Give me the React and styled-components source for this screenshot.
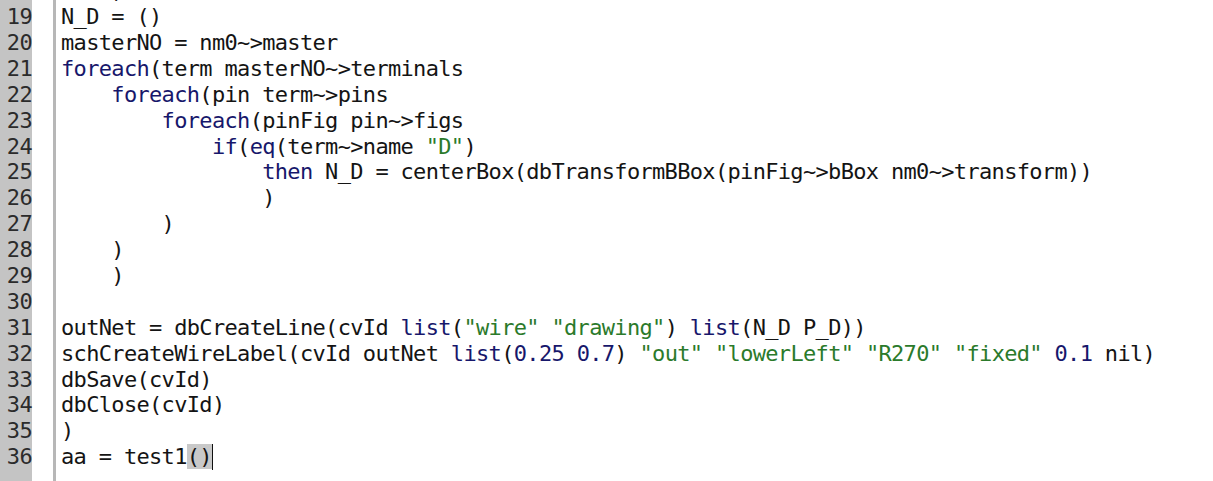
import React from 'react'
import styled, { createGlobalStyle } from 'styled-components'

const Global = createGlobalStyle`
    html, body {
        margin: 0;
        padding: 0;
        background: #fff;
    }
`

const LINE = 25.9

const Editor = styled.div`
    width: 1213px;
    height: 481px;
    overflow: hidden;
    display: flex;
    background: #fff;
    font-family: 'DejaVu Sans Mono', 'Liberation Mono', monospace;
    font-size: 22px;
    letter-spacing: -0.67px;
`
const Gutter = styled.div`
    width: 32px;
    flex: none;
    background: #c4c4c4;
    color: #2b2b2b;
    text-align: right;
    margin-top: -${LINE - 4.05}px;
    padding-bottom: 40px;
`
const Num = styled.div`
    height: ${LINE}px;
    line-height: ${LINE}px;
    white-space: pre;
`
const Margin = styled.div`
    width: 21px;
    flex: none;
    border-right: 3px solid #b7b7b7;
`
const Code = styled.div`
    flex: 1;
    padding-left: 5px;
    margin-top: -${LINE - 4.05}px;
    color: #141414;
`
const Line = styled.div`
    height: ${LINE}px;
    line-height: ${LINE}px;
    white-space: pre;
`
const Tok = styled.span`
    color: ${p => p.$kind === 'kw' || p.$kind === 'num' ? '#17176b' : p.$kind === 'str' ? '#2b7a2b' : 'inherit'};
`
const Match = styled.span`
    background: #c9c9c9;
`
const Caret = styled.span`
    display: inline-block;
    width: 1px;
    height: 26px;
    background: #111;
    vertical-align: middle;
    margin-top: -3px;
`

const lines = [
    '    )',
    'N_D = ()',
    'masterNO = nm0~>master',
    'foreach(term masterNO~>terminals',
    '    foreach(pin term~>pins',
    '        foreach(pinFig pin~>figs',
    '            if(eq(term~>name "D")',
    '                then N_D = centerBox(dbTransformBBox(pinFig~>bBox nm0~>transform))',
    '                )',
    '        )',
    '    )',
    '    )',
    '',
    'outNet = dbCreateLine(cvId list("wire" "drawing") list(N_D P_D))',
    'schCreateWireLabel(cvId outNet list(0.25 0.7) "out" "lowerLeft" "R270" "fixed" 0.1 nil)',
    'dbSave(cvId)',
    'dbClose(cvId)',
    ')',
]

const tokenRe = /("[^"]*")|(\b\d+\.\d+\b)|\b(foreach|if|then|list|eq)\b/g

function highlight(text) {
    const out = []
    let last = 0
    let m
    tokenRe.lastIndex = 0
    while ((m = tokenRe.exec(text))) {
        if (m.index > last) out.push(text.slice(last, m.index))
        const kind = m[1] ? 'str' : m[2] ? 'num' : 'kw'
        out.push(<Tok key={m.index} $kind={kind}>{m[0]}</Tok>)
        last = m.index + m[0].length
    }
    if (last < text.length) out.push(text.slice(last))
    return out
}

export default function App() {
    return (
        <>
            <Global />
            <Editor>
                <Gutter>
                    {lines.map((_, i) => <Num key={i}>{18 + i}</Num>)}
                    <Num>36</Num>
                </Gutter>
                <Margin />
                <Code>
                    {lines.map((l, i) => <Line key={i}>{highlight(l)}</Line>)}
                    <Line>aa = test1<Match>()</Match><Caret /></Line>
                </Code>
            </Editor>
        </>
    )
}
